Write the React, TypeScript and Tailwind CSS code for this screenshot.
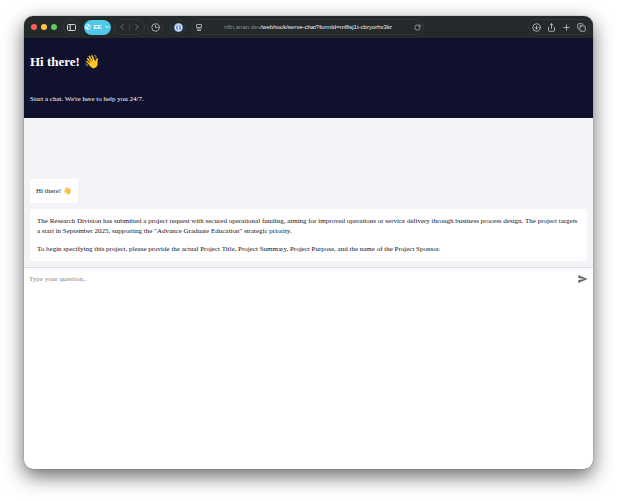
import type { ReactNode } from "react";
import {
  ChevronDown,
  ChevronLeft,
  ChevronRight,
  CircleArrowDown,
  Clock3,
  Copy,
  Plus,
  RotateCw,
  Share,
} from "lucide-react";

const pill =
  "flex h-4 shrink-0 items-center rounded-full border border-[#33383b] bg-[#24292b] text-[#d3d5d6]";

function IconButton({ label, className = "", children }: { label: string; className?: string; children: ReactNode }) {
  return (
    <button type="button" aria-label={label} className={`flex items-center justify-center ${className}`}>
      {children}
    </button>
  );
}

function Toolbar() {
  return (
    <div className="flex h-[22px] shrink-0 items-center bg-[#24292b] pr-[3px] pl-[7px] font-['Liberation_Sans',sans-serif]">
      <div className="flex shrink-0 gap-1">
        <span className="size-1.5 rounded-full bg-[#ff605c]" />
        <span className="size-1.5 rounded-full bg-[#ffc73d]" />
        <span className="size-1.5 rounded-full bg-[#5bcd5c]" />
      </div>
      <IconButton label="Show sidebar" className={`${pill} ml-1.5 w-[17px]`}>
        <svg viewBox="0 0 18 14" className="h-[7px] w-[9px]" fill="none" stroke="currentColor" strokeWidth="2" aria-hidden="true">
          <rect x="1" y="1" width="16" height="12" rx="2" />
          <path d="M6.5 1v12" />
          <path d="M3 4.5h2M3 7.5h2" strokeWidth="1" />
        </svg>
      </IconButton>
      <button
        type="button"
        className="ml-1 flex h-[15px] w-[27px] shrink-0 items-center justify-center gap-0.5 rounded-full bg-[#4fc8ea] text-[6px] leading-none font-bold text-white"
      >
        <svg viewBox="0 0 12 12" className="size-1.5 shrink-0" aria-hidden="true">
          <circle cx="6" cy="6" r="5.5" fill="#e9faff" />
          <path d="M2 3l3-1 1 2-2 2-2-1zM7 5l3-1 1 3-3 3-2-2z" fill="#4fc8ea" />
        </svg>
        EE
        <ChevronDown size={6} strokeWidth={4} className="shrink-0" />
      </button>
      <div className={`${pill} ml-[3px] w-[31px]`}>
        <IconButton label="Back" className="flex-1 text-[#7c8183]">
          <ChevronLeft size={10} strokeWidth={2} />
        </IconButton>
        <span className="h-2 w-px bg-[#383d40]" />
        <IconButton label="Forward" className="flex-1 text-[#7c8183]">
          <ChevronRight size={10} strokeWidth={2} />
        </IconButton>
      </div>
      <IconButton label="History" className={`${pill} ml-0.5 w-4`}>
        <Clock3 size={9} strokeWidth={2} />
      </IconButton>
      <IconButton label="Passwords" className={`${pill} ml-[7px] w-4`}>
        <svg viewBox="0 0 18 18" className="size-[9px]" aria-hidden="true">
          <circle cx="9" cy="9" r="8" fill="#e8f0fb" stroke="#86aeea" strokeWidth="2" />
          <circle cx="9" cy="9" r="5" fill="#4d83dc" />
          <rect x="7.5" y="5" width="3" height="8" rx="1" fill="#fff" />
        </svg>
      </IconButton>
      <div className={`${pill} ml-1.5 w-[232px] min-w-0 shrink pr-0.5 pl-[3px]`}>
        <svg viewBox="0 0 12 14" className="h-[7px] w-1.5 shrink-0" fill="none" stroke="currentColor" strokeWidth="1.5" aria-hidden="true">
          <rect x="1" y="1" width="10" height="6" rx="1" />
          <path d="M1 10h10M2 13h8" />
        </svg>
        <span className="min-w-0 flex-1 truncate text-center text-[6px] leading-[8px] text-[#f2f3f3]">
          <span className="text-[#8b9092]">n8n.anan.dev</span>/webhook/serve-chat?formId=mffisj1t-cbryorhx3kr
        </span>
        <IconButton label="Reload" className="shrink-0">
          <RotateCw size={7} strokeWidth={2} />
        </IconButton>
      </div>
      <div className={`${pill} ml-auto w-[62px] justify-between px-[3px]`}>
        <IconButton label="Downloads">
          <CircleArrowDown size={9} strokeWidth={2} />
        </IconButton>
        <IconButton label="Share">
          <Share size={9} strokeWidth={2} />
        </IconButton>
        <IconButton label="New tab">
          <Plus size={9} strokeWidth={2} />
        </IconButton>
        <IconButton label="Show tabs">
          <Copy size={9} strokeWidth={2} />
        </IconButton>
      </div>
    </div>
  );
}

export default function App() {
  return (
    <div className="flex h-screen flex-col bg-white px-6 pt-4 pb-[31px] font-['Liberation_Serif',serif]">
      <main className="flex min-h-0 flex-1 flex-col overflow-hidden rounded-[9px] bg-white shadow-[0_0_1px_rgba(0,0,0,0.7),0_7px_20px_rgba(0,0,0,0.6)]">
        <Toolbar />
        <header className="flex h-20 shrink-0 flex-col justify-between bg-[#10112d] px-1.5 pt-4 pb-3.5 text-white">
          <h1 className="flex gap-1 text-[13px] leading-4 font-bold">
            Hi there! <span>👋</span>
          </h1>
          <p className="text-[7px] leading-[10px]">Start a chat. We're here to help you 24/7.</p>
        </header>
        <section className="flex shrink-0 flex-col items-start gap-1.5 bg-[#f2f4f8] px-1.5 pt-[61px] pb-1.5 text-[7px] leading-[10px] text-[#10112d]">
          <div className="rounded-xs bg-white px-1.5 py-[7px]">Hi there! 👋</div>
          <div className="flex w-full flex-col gap-2 rounded-xs bg-white px-[7px] py-[7px]">
            <p>
              The Research Division has submitted a project request with secured operational funding, aiming for improved
              operations or service delivery through business process design. The project targets a start in September
              2025, supporting the "Advance Graduate Education" strategic priority.
            </p>
            <p>
              To begin specifying this project, please provide the actual Project Title, Project Summary, Project Purpose,
              and the name of the Project Sponsor.
            </p>
          </div>
        </section>
        <form className="flex h-[22px] shrink-0 items-center border-t border-[#dcdee6] pr-[5px] pl-[5px]">
          <input
            type="text"
            aria-label="Type your question"
            placeholder="Type your question.."
            className="h-[10px] min-w-0 flex-1 text-[7px] leading-[10px] outline-none placeholder:text-[#85878c]"
          />
          <button type="button" aria-label="Send" className="text-[#666]">
            <svg viewBox="2 3 21 18" className="h-2 w-[10px]" fill="currentColor" aria-hidden="true">
              <path d="M2.01 21L23 12 2.01 3 2 10l15 2-15 2z" />
            </svg>
          </button>
        </form>
      </main>
    </div>
  );
}
